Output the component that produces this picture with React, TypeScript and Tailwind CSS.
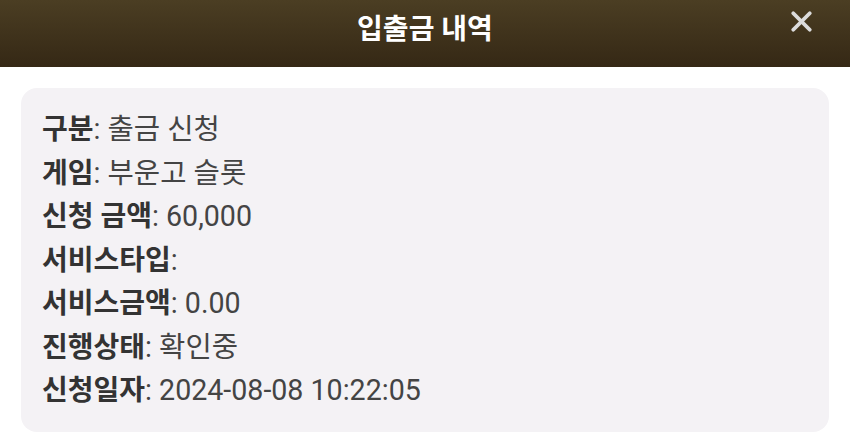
import { X } from "lucide-react";

const rows = [
  { label: "구분", value: "출금 신청" },
  { label: "게임", value: "부운고 슬롯" },
  { label: "신청 금액", value: "60,000" },
  { label: "서비스타입", value: "" },
  { label: "서비스금액", value: "0.00" },
  { label: "진행상태", value: "확인중" },
  { label: "신청일자", value: "2024-08-08 10:22:05" },
];

export default function App() {
  return (
    <div
      className="w-[850px] h-[435px] overflow-hidden bg-white"
      style={{ fontFamily: 'Roboto, "Noto Sans CJK KR", sans-serif' }}
    >
      {/* Header bar */}
      <div className="relative h-[67px] flex items-center justify-center bg-gradient-to-b from-[#4b3e23] to-[#352815]">
        <h1 className="text-[28px] font-bold text-white -mt-[8px]">입출금 내역</h1>
        <button className="absolute right-[32px] top-[5px] text-[#dcdcdc]">
          <X size={33} strokeWidth={2.8} />
        </button>
      </div>

      {/* Detail card */}
      <div className="mx-[21px] mt-[21px] h-[344px] rounded-[16px] bg-[#f4f2f5] px-[21px] pt-[20px]">
        {rows.map((row) => (
          <div key={row.label} className="h-[43.5px] text-[28px] leading-[43.5px] text-[#444]">
            <span className="font-bold text-[#333]">{row.label}</span>
            <span className="text-[28.6px]">: {row.value}</span>
          </div>
        ))}
      </div>
    </div>
  );
}
